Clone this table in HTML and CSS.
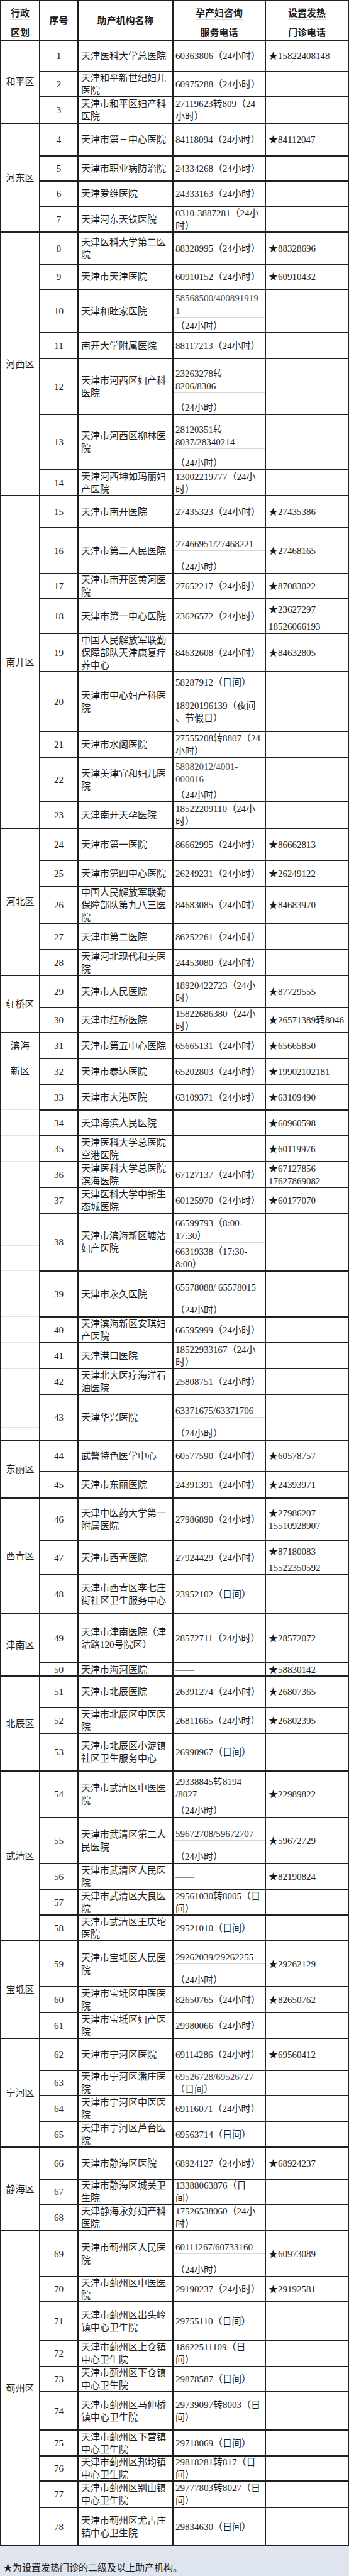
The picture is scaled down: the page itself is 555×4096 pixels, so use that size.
FILE: index.html
```html
<!DOCTYPE html>
<html lang="zh-CN">
<head>
<meta charset="utf-8">
<title>助产机构孕产妇咨询服务电话</title>
<link rel="stylesheet" href="styles.css">
</head>
<body>
<div class="sheet">
<div class="grid">
<div class="c hd stack"><div class="pt hp"><span>行政</span></div><div class="pb"><span>区划</span></div></div>
<div class="c hd"><span>序号</span></div>
<div class="c hd"><span>助产机构名称</span></div>
<div class="c hd stack"><div class="pt hp"><span>孕产妇咨询</span></div><div class="pb"><span>服务电话</span></div></div>
<div class="c hd stack"><div class="pt hp"><span>设置发热</span></div><div class="pb"><span>门诊电话</span></div></div>

<div class="c dist s3"><span>和平区</span></div>
<div class="c num"><span>1</span></div><div class="c name"><span>天津医科大学总医院</span></div><div class="c tel"><span>60363806（24小时）</span></div><div class="c fev"><span>★15822408148</span></div>
<div class="c num"><span>2</span></div><div class="c name"><span>天津和平新世纪妇儿<br>医院</span></div><div class="c tel"><span>60975288（24小时）</span></div><div class="c fev"></div>
<div class="c num"><span>3</span></div><div class="c name"><span>天津市和平区妇产科<br>医院</span></div><div class="c tel"><span>27119623转809（24<br>小时）</span></div><div class="c fev"></div>

<div class="c dist s4"><span>河东区</span></div>
<div class="c num"><span>4</span></div><div class="c name"><span>天津市第三中心医院</span></div><div class="c tel"><span>84118094（24小时）</span></div><div class="c fev"><span>★84112047</span></div>
<div class="c num"><span>5</span></div><div class="c name"><span>天津市职业病防治院</span></div><div class="c tel"><span>24334268（24小时）</span></div><div class="c fev"></div>
<div class="c num"><span>6</span></div><div class="c name"><span>天津爱维医院</span></div><div class="c tel"><span>24333163（24小时）</span></div><div class="c fev"></div>
<div class="c num"><span>7</span></div><div class="c name"><span>天津河东天铁医院</span></div><div class="c tel"><span>0310-3887281（24小<br>时）</span></div><div class="c fev"></div>

<div class="c dist s7"><span>河西区</span></div>
<div class="c num"><span>8</span></div><div class="c name"><span>天津医科大学第二医<br>院</span></div><div class="c tel"><span>88328995（24小时）</span></div><div class="c fev"><span>★88328696</span></div>
<div class="c num"><span>9</span></div><div class="c name"><span>天津市天津医院</span></div><div class="c tel"><span>60910152（24小时）</span></div><div class="c fev"><span>★60910432</span></div>
<div class="c num"><span>10</span></div><div class="c name"><span>天津和睦家医院</span></div><div class="c tel split"><div class="pt grey"><span>58568500/400891919<br>1</span></div><div class="pb"><span>（24小时）</span></div></div><div class="c fev"></div>
<div class="c num"><span>11</span></div><div class="c name"><span>南开大学附属医院</span></div><div class="c tel"><span>88117213（24小时）</span></div><div class="c fev"></div>
<div class="c num"><span>12</span></div><div class="c name"><span>天津市河西区妇产科<br>医院</span></div><div class="c tel split"><div class="pt"><span>23263278转<br>8206/8306</span></div><div class="pb"><span>（24小时）</span></div></div><div class="c fev"></div>
<div class="c num"><span>13</span></div><div class="c name"><span>天津市河西区柳林医<br>院</span></div><div class="c tel split"><div class="pt"><span>28120351转<br>8037/28340214</span></div><div class="pb"><span>（24小时）</span></div></div><div class="c fev"></div>
<div class="c num"><span>14</span></div><div class="c name"><span>天津河西坤如玛丽妇<br>产医院</span></div><div class="c tel"><span>13002219777（24小<br>时）</span></div><div class="c fev"></div>

<div class="c dist s9"><span>南开区</span></div>
<div class="c num"><span>15</span></div><div class="c name"><span>天津市南开医院</span></div><div class="c tel"><span>27435323（24小时）</span></div><div class="c fev"><span>★27435386</span></div>
<div class="c num"><span>16</span></div><div class="c name"><span>天津市第二人民医院</span></div><div class="c tel split"><div class="pt"><span>27466951/27468221</span></div><div class="pb"><span>（24小时）</span></div></div><div class="c fev"><span>★27468165</span></div>
<div class="c num"><span>17</span></div><div class="c name"><span>天津市南开区黄河医<br>院</span></div><div class="c tel"><span>27652217（24小时）</span></div><div class="c fev"><span>★87083022</span></div>
<div class="c num"><span>18</span></div><div class="c name"><span>天津市第一中心医院</span></div><div class="c tel"><span>23626572（24小时）</span></div><div class="c fev split"><div class="pt"><span>★23627297</span></div><div class="pb"><span>18526066193</span></div></div>
<div class="c num"><span>19</span></div><div class="c name"><span>中国人民解放军联勤<br>保障部队天津康复疗<br>养中心</span></div><div class="c tel"><span>84632608（24小时）</span></div><div class="c fev"><span>★84632805</span></div>
<div class="c num"><span>20</span></div><div class="c name"><span>天津市中心妇产科医<br>院</span></div><div class="c tel split st"><div class="pt"><span>58287912（日间）</span></div><div class="pb"><span>18920196139（夜间<br>、节假日）</span></div></div><div class="c fev"></div>
<div class="c num"><span>21</span></div><div class="c name"><span>天津市水阁医院</span></div><div class="c tel"><span>27555208转8807（24<br>小时）</span></div><div class="c fev"></div>
<div class="c num"><span>22</span></div><div class="c name"><span>天津美津宜和妇儿医<br>院</span></div><div class="c tel split"><div class="pt grey"><span>58982012/4001-<br>000016</span></div><div class="pb"><span>（24小时）</span></div></div><div class="c fev"></div>
<div class="c num"><span>23</span></div><div class="c name"><span>天津南开天孕医院</span></div><div class="c tel"><span>18522209110（24小<br>时）</span></div><div class="c fev"></div>

<div class="c dist s5"><span>河北区</span></div>
<div class="c num"><span>24</span></div><div class="c name"><span>天津市第一医院</span></div><div class="c tel"><span>86662995（24小时）</span></div><div class="c fev"><span>★86662813</span></div>
<div class="c num"><span>25</span></div><div class="c name"><span>天津市第四中心医院</span></div><div class="c tel"><span>26249231（24小时）</span></div><div class="c fev"><span>★26249122</span></div>
<div class="c num"><span>26</span></div><div class="c name"><span>中国人民解放军联勤<br>保障部队第九八三医<br>院</span></div><div class="c tel"><span>84683085（24小时）</span></div><div class="c fev"><span>★84683970</span></div>
<div class="c num"><span>27</span></div><div class="c name"><span>天津市第二医院</span></div><div class="c tel"><span>86252261（24小时）</span></div><div class="c fev"></div>
<div class="c num"><span>28</span></div><div class="c name"><span>天津河北现代和美医<br>院</span></div><div class="c tel"><span>24453080（24小时）</span></div><div class="c fev"></div>

<div class="c dist s2"><span>红桥区</span></div>
<div class="c num"><span>29</span></div><div class="c name"><span>天津市人民医院</span></div><div class="c tel"><span>18920422723（24小<br>时）</span></div><div class="c fev"><span>★87729555</span></div>
<div class="c num"><span>30</span></div><div class="c name"><span>天津市红桥医院</span></div><div class="c tel"><span>15822686380（24小<br>时）</span></div><div class="c fev"><span>★26571389转8046</span></div>

<div class="c bh s13"><div class="seg"><span>滨海</span></div><div class="seg"><span>新区</span></div><div class="seg"></div><div class="seg"></div><div class="seg"></div><div class="seg"></div><div class="seg"></div><div class="seg"></div><div class="seg"></div><div class="seg"></div><div class="seg"></div><div class="seg"></div><div class="seg"></div><div class="seg"></div><div class="seg"></div><div class="seg last"></div></div>
<div class="c num"><span>31</span></div><div class="c name"><span>天津市第五中心医院</span></div><div class="c tel"><span>65665131（24小时）</span></div><div class="c fev"><span>★65665850</span></div>
<div class="c num"><span>32</span></div><div class="c name"><span>天津市泰达医院</span></div><div class="c tel"><span>65202803（24小时）</span></div><div class="c fev"><span>★19902102181</span></div>
<div class="c num"><span>33</span></div><div class="c name"><span>天津市大港医院</span></div><div class="c tel"><span>63109371（24小时）</span></div><div class="c fev"><span>★63109490</span></div>
<div class="c num"><span>34</span></div><div class="c name"><span>天津海滨人民医院</span></div><div class="c tel"><span>——</span></div><div class="c fev"><span>★60960598</span></div>
<div class="c num"><span>35</span></div><div class="c name"><span>天津医科大学总医院<br>空港医院</span></div><div class="c tel"><span>——</span></div><div class="c fev"><span>★60119976</span></div>
<div class="c num"><span>36</span></div><div class="c name"><span>天津医科大学总医院<br>滨海医院</span></div><div class="c tel"><span>67127137（24小时）</span></div><div class="c fev"><span>★67127856<br>17627869082</span></div>
<div class="c num"><span>37</span></div><div class="c name"><span>天津医科大学中新生<br>态城医院</span></div><div class="c tel"><span>60125970（24小时）</span></div><div class="c fev"><span>★60177070</span></div>
<div class="c num"><span>38</span></div><div class="c name"><span>天津市滨海新区塘沽<br>妇产医院</span></div><div class="c tel split sb"><div class="pt"><span>66599793（8:00-<br>17:30）</span></div><div class="pb"><span>66319338（17:30-<br>8:00）</span></div></div><div class="c fev"></div>
<div class="c num"><span>39</span></div><div class="c name"><span>天津市永久医院</span></div><div class="c tel split"><div class="pt"><span>65578088/ 65578015</span></div><div class="pb"><span>（24小时）</span></div></div><div class="c fev"></div>
<div class="c num"><span>40</span></div><div class="c name"><span>天津滨海新区安琪妇<br>产医院</span></div><div class="c tel"><span>66595999（24小时）</span></div><div class="c fev"></div>
<div class="c num"><span>41</span></div><div class="c name"><span>天津港口医院</span></div><div class="c tel"><span>18522933167（24小<br>时）</span></div><div class="c fev"></div>
<div class="c num"><span>42</span></div><div class="c name"><span>天津北大医疗海洋石<br>油医院</span></div><div class="c tel"><span>25808751（24小时）</span></div><div class="c fev"></div>
<div class="c num"><span>43</span></div><div class="c name"><span>天津华兴医院</span></div><div class="c tel split"><div class="pt"><span>63371675/63371706</span></div><div class="pb"><span>（24小时）</span></div></div><div class="c fev"></div>

<div class="c dist s2"><span>东丽区</span></div>
<div class="c num"><span>44</span></div><div class="c name"><span>武警特色医学中心</span></div><div class="c tel"><span>60577590（24小时）</span></div><div class="c fev"><span>★60578757</span></div>
<div class="c num"><span>45</span></div><div class="c name"><span>天津市东丽医院</span></div><div class="c tel"><span>24391391（24小时）</span></div><div class="c fev"><span>★24393971</span></div>

<div class="c dist s3"><span>西青区</span></div>
<div class="c num"><span>46</span></div><div class="c name"><span>天津中医药大学第一<br>附属医院</span></div><div class="c tel"><span>27986890（24小时）</span></div><div class="c fev"><span>★27986207<br>15510928907</span></div>
<div class="c num"><span>47</span></div><div class="c name"><span>天津市西青医院</span></div><div class="c tel"><span>27924429（24小时）</span></div><div class="c fev split"><div class="pt"><span>★87180083</span></div><div class="pb"><span>15522350592</span></div></div>
<div class="c num"><span>48</span></div><div class="c name"><span>天津市西青区李七庄<br>街社区卫生服务中心</span></div><div class="c tel"><span>23952102（日间）</span></div><div class="c fev"></div>

<div class="c dist s2"><span>津南区</span></div>
<div class="c num"><span>49</span></div><div class="c name"><span>天津市津南医院（津<br>沽路120号院区）</span></div><div class="c tel"><span>28572711（24小时）</span></div><div class="c fev"><span>★28572072</span></div>
<div class="c num"><span>50</span></div><div class="c name"><span>天津市海河医院</span></div><div class="c tel"><span>——</span></div><div class="c fev"><span>★58830142</span></div>

<div class="c dist s3"><span>北辰区</span></div>
<div class="c num"><span>51</span></div><div class="c name"><span>天津市北辰医院</span></div><div class="c tel"><span>26391274（24小时）</span></div><div class="c fev"><span>★26807365</span></div>
<div class="c num"><span>52</span></div><div class="c name"><span>天津市北辰区中医医<br>院</span></div><div class="c tel"><span>26811665（24小时）</span></div><div class="c fev"><span>★26802395</span></div>
<div class="c num"><span>53</span></div><div class="c name"><span>天津市北辰区小淀镇<br>社区卫生服务中心</span></div><div class="c tel"><span>26990967（日间）</span></div><div class="c fev"></div>

<div class="c dist s5"><span>武清区</span></div>
<div class="c num"><span>54</span></div><div class="c name"><span>天津市武清区中医医<br>院</span></div><div class="c tel split"><div class="pt"><span>29338845转8194<br>/8027</span></div><div class="pb"><span>（24小时）</span></div></div><div class="c fev"><span>★22989822</span></div>
<div class="c num"><span>55</span></div><div class="c name"><span>天津市武清区第二人<br>民医院</span></div><div class="c tel split"><div class="pt"><span>59672708/59672707</span></div><div class="pb"><span>（24小时）</span></div></div><div class="c fev"><span>★59672729</span></div>
<div class="c num"><span>56</span></div><div class="c name"><span>天津市武清区人民医<br>院</span></div><div class="c tel"><span>——</span></div><div class="c fev"><span>★82190824</span></div>
<div class="c num"><span>57</span></div><div class="c name"><span>天津市武清区大良医<br>院</span></div><div class="c tel"><span>29561030转8005（日<br>间）</span></div><div class="c fev"></div>
<div class="c num"><span>58</span></div><div class="c name"><span>天津市武清区王庆坨<br>医院</span></div><div class="c tel"><span>29521010（日间）</span></div><div class="c fev"></div>

<div class="c dist s3"><span>宝坻区</span></div>
<div class="c num"><span>59</span></div><div class="c name"><span>天津市宝坻区人民医<br>院</span></div><div class="c tel split"><div class="pt"><span>29262039/29262255</span></div><div class="pb"><span>（24小时）</span></div></div><div class="c fev"><span>★29262129</span></div>
<div class="c num"><span>60</span></div><div class="c name"><span>天津市宝坻区中医医<br>院</span></div><div class="c tel"><span>82650765（24小时）</span></div><div class="c fev"><span>★82650762</span></div>
<div class="c num"><span>61</span></div><div class="c name"><span>天津市宝坻区妇产医<br>院</span></div><div class="c tel"><span>29980066（24小时）</span></div><div class="c fev"></div>

<div class="c dist s4"><span>宁河区</span></div>
<div class="c num"><span>62</span></div><div class="c name"><span>天津市宁河区医院</span></div><div class="c tel"><span>69114286（24小时）</span></div><div class="c fev"><span>★69560412</span></div>
<div class="c num"><span>63</span></div><div class="c name"><span>天津市宁河区潘庄医<br>院</span></div><div class="c tel grey"><span>69526728/69526727<br>（日间）</span></div><div class="c fev"></div>
<div class="c num"><span>64</span></div><div class="c name"><span>天津市宁河区中医医<br>院</span></div><div class="c tel"><span>69116071（24小时）</span></div><div class="c fev"></div>
<div class="c num"><span>65</span></div><div class="c name"><span>天津市宁河区芦台医<br>院</span></div><div class="c tel"><span>69563714（日间）</span></div><div class="c fev"></div>

<div class="c dist s3"><span>静海区</span></div>
<div class="c num"><span>66</span></div><div class="c name"><span>天津市静海区医院</span></div><div class="c tel"><span>68924127（24小时）</span></div><div class="c fev"><span>★68924237</span></div>
<div class="c num"><span>67</span></div><div class="c name"><span>天津市静海区城关卫<br>生院</span></div><div class="c tel"><span>13388063876（日<br>间）</span></div><div class="c fev"></div>
<div class="c num"><span>68</span></div><div class="c name"><span>天津静海永好妇产科<br>医院</span></div><div class="c tel"><span>17526538060（24小<br>时）</span></div><div class="c fev"></div>

<div class="c dist s10"><span>蓟州区</span></div>
<div class="c num"><span>69</span></div><div class="c name"><span>天津市蓟州区人民医<br>院</span></div><div class="c tel split"><div class="pt"><span>60111267/60733160</span></div><div class="pb"><span>（24小时）</span></div></div><div class="c fev"><span>★60973089</span></div>
<div class="c num"><span>70</span></div><div class="c name"><span>天津市蓟州区中医医<br>院</span></div><div class="c tel"><span>29190237（24小时）</span></div><div class="c fev"><span>★29192581</span></div>
<div class="c num"><span>71</span></div><div class="c name"><span>天津市蓟州区出头岭<br>镇中心卫生院</span></div><div class="c tel"><span>29755110（日间）</span></div><div class="c fev"></div>
<div class="c num"><span>72</span></div><div class="c name"><span>天津市蓟州区上仓镇<br>中心卫生院</span></div><div class="c tel"><span>18622511109（日<br>间）</span></div><div class="c fev"></div>
<div class="c num"><span>73</span></div><div class="c name"><span>天津市蓟州区下仓镇<br>中心卫生院</span></div><div class="c tel"><span>29878587（日间）</span></div><div class="c fev"></div>
<div class="c num"><span>74</span></div><div class="c name"><span>天津市蓟州区马伸桥<br>镇中心卫生院</span></div><div class="c tel"><span>29739097转8003（日<br>间）</span></div><div class="c fev"></div>
<div class="c num"><span>75</span></div><div class="c name"><span>天津市蓟州区下营镇<br>中心卫生院</span></div><div class="c tel"><span>29718069（日间）</span></div><div class="c fev"></div>
<div class="c num"><span>76</span></div><div class="c name"><span>天津市蓟州区邦均镇<br>中心卫生院</span></div><div class="c tel"><span>29818281转817（日<br>间）</span></div><div class="c fev"></div>
<div class="c num"><span>77</span></div><div class="c name"><span>天津市蓟州区别山镇<br>中心卫生院</span></div><div class="c tel"><span>29777803转8027（日<br>间）</span></div><div class="c fev"></div>
<div class="c num"><span>78</span></div><div class="c name"><span>天津市蓟州区尤古庄<br>镇中心卫生院</span></div><div class="c tel"><span>29834630（日间）</span></div><div class="c fev"></div>
</div>
<div class="note">★为设置发热门诊的二级及以上助产机构。</div>
</div>
</body>
</html>
```
FILE: styles.css
```css
html, body {
  margin: 0;
  padding: 0;
  background: #ffffff;
}

body {
  font-family: "Liberation Serif", "Noto Sans CJK SC", serif;
  font-size: 15px;
  color: #1c1c1c;
}

.sheet {
  width: 555px;
}

.grid {
  display: grid;
  box-sizing: border-box;
  width: 555px;
  grid-template-columns: 60px 59px 149px 145px 130px;
  grid-template-rows:
    61px
    48px 38px 40px 50px 38px 38px 39px 49px 38px 67px
    39px 87px 86px 39px 49px 71px 38px 53px 59px 93px
    39px 69px 40px 49px 39px 58px 39px 39px 49px 38px
    39px 39px 39px 39px 39px 39px 39px 90px 71px 39px
    39px 39px 71px 48px 40px 66px 52px 60px 76px 19px
    48px 39px 58px 72px 71px 39px 39px 39px 71px 39px
    39px 49px 38px 39px 39px 49px 38px 40px 71px 38px
    59px 40px 38px 59px 39px 38px 40px 59px;
  gap: 2px;
  padding: 2px;
  background: #1f1f1f;
}

.c {
  background: #ffffff;
  display: flex;
  align-items: center;
  overflow: hidden;
  white-space: nowrap;
  line-height: 20px;
  min-width: 0;
  min-height: 0;
}

.hd {
  justify-content: center;
  text-align: center;
  font-weight: bold;
}

.c.stack {
  display: grid;
  grid-template-rows: 39px 1fr;
}

.dist {
  justify-content: center;
  text-align: center;
}

.num {
  justify-content: center;
}

.name {
  padding-left: 4px;
}

.tel {
  padding-left: 3px;
}

.fev {
  padding-left: 4px;
}

.c.split {
  display: grid;
  grid-template-rows: 1fr 20px;
  padding-left: 0;
}

.c.split.st {
  grid-template-rows: 33px 1fr;
}

.c.split.sb {
  grid-template-rows: 1fr 40px;
}

.pt,
.pb {
  display: flex;
  align-items: center;
  min-height: 0;
  overflow: hidden;
}

.split .pt,
.split .pb {
  padding-left: 3px;
}

.fev.split .pt,
.fev.split .pb {
  padding-left: 4px;
}

.stack .pt,
.stack .pb {
  justify-content: center;
}

.pt {
  box-sizing: border-box;
  border-bottom: 1px solid #d8d8d8;
}

.grey {
  color: #4a4a4a;
}

.s2 { grid-row: span 2; }
.s3 { grid-row: span 3; }
.s4 { grid-row: span 4; }
.s5 { grid-row: span 5; }
.s7 { grid-row: span 7; }
.s9 { grid-row: span 9; }
.s10 { grid-row: span 10; }
.s13 { grid-row: span 13; }

.c.bh {
  display: grid;
  grid-template-rows: 40px 41px 41px 41px 41px 41px 41px 52px 40px 53px 20px 41px 41px 41px 53px 19px;
  align-items: stretch;
}

.seg {
  box-sizing: border-box;
  display: flex;
  align-items: center;
  justify-content: center;
  border-bottom: 1px solid #e2e2e2;
}

.seg.last {
  border-bottom: none;
}

.note {
  box-sizing: border-box;
  height: 47px;
  padding: 24px 0 0 5px;
  background: #dfe5ee;
  line-height: 20px;
  font-size: 15px;
  color: #1c1c1c;
  white-space: nowrap;
}
```
